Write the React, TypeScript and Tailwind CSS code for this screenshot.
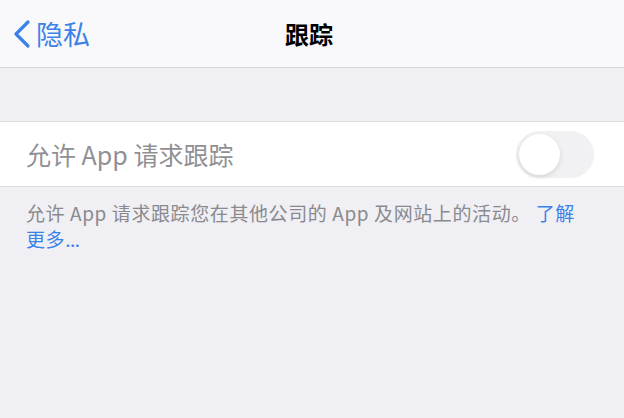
import React from 'react';

const font = { fontFamily: '"Noto Sans CJK SC", "Liberation Sans", sans-serif' };

export default function App() {
  return (
    <div className="w-[624px] h-[418px] bg-[#efeff4] overflow-hidden" style={font}>
      {/* nav bar */}
      <div className="relative h-[68px] bg-[#f9f9fb] border-b border-[#d8d8dc] flex items-center justify-center">
        <div className="absolute left-[12px] top-0 h-full flex items-center gap-[4px] text-[#3b82e8]">
          <svg width="20" height="30" viewBox="0 0 20 30" fill="none">
            <path d="M16 3 L4 15 L16 27" stroke="currentColor" strokeWidth="3.2" strokeLinecap="round" strokeLinejoin="round" />
          </svg>
          <span className="text-[27px] leading-none">隐私</span>
        </div>
        <span className="text-[24px] font-bold text-black leading-none mr-[6px]">跟踪</span>
      </div>

      <div className="h-[53px]" />

      {/* row */}
      <div className="h-[66px] bg-white border-y border-[#dcdce0] flex items-center justify-between pl-[26px] pr-[30px]">
        <span className="text-[25px] text-[#909094] leading-none">允许 App 请求跟踪</span>
        <div className="w-[78px] h-[47px] rounded-full bg-[#f1f1f3] p-[3px] flex items-center">
          <div className="w-[41px] h-[41px] rounded-full bg-white shadow-[0_2px_5px_rgba(0,0,0,0.12)]" />
        </div>
      </div>

      {/* footer */}
      <div className="px-[26px] pt-[13px] text-[19px] leading-[26px] tracking-[0.6px] text-[#8a8a8e]">
        <div className="whitespace-nowrap">
          允许 App 请求跟踪您在其他公司的 App 及网站上的活动。 <span className="text-[#3b82e8]">了解</span>
        </div>
        <div className="text-[#3b82e8]">
          更多<span className="tracking-[-0.5px]">...</span>
        </div>
      </div>
    </div>
  );
}
